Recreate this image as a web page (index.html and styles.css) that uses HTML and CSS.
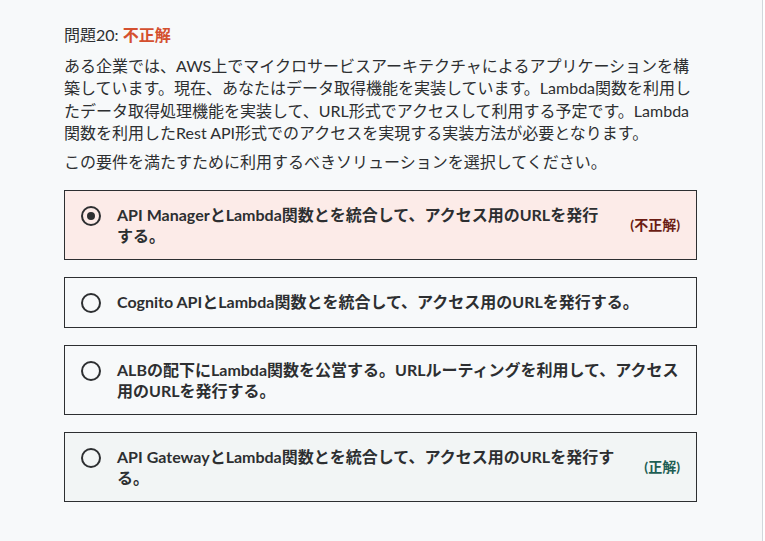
FILE: index.html
```html
<!DOCTYPE html>
<html lang="ja">
<head>
<meta charset="utf-8">
<title>問題20</title>
<link rel="stylesheet" href="styles.css">
</head>
<body>
<main class="page">
  <h2 class="q-title">問題20: <span class="q-result">不正解</span></h2>
  <p class="q-text">ある企業では、AWS上でマイクロサービスアーキテクチャによるアプリケーションを構築しています。現在、あなたはデータ取得機能を実装しています。Lambda関数を利用したデータ取得処理機能を実装して、URL形式でアクセスして利用する予定です。Lambda関数を利用したRest API形式でのアクセスを実現する実装方法が必要となります。</p>
  <p class="q-prompt">この要件を満たすために利用するべきソリューションを選択してください。</p>
  <ul class="answers">
    <li class="answer answer-wrong">
      <span class="radio radio-checked"><span class="radio-dot"></span></span>
      <span class="answer-text">API ManagerとLambda関数とを統合して、アクセス用のURLを発行する。</span>
      <span class="answer-tag tag-wrong">(不正解)</span>
    </li>
    <li class="answer">
      <span class="radio"></span>
      <span class="answer-text">Cognito APIとLambda関数とを統合して、アクセス用のURLを発行する。</span>
    </li>
    <li class="answer">
      <span class="radio"></span>
      <span class="answer-text">ALBの配下にLambda関数を公営する。URLルーティングを利用して、アクセス用のURLを発行する。</span>
    </li>
    <li class="answer answer-correct">
      <span class="radio"></span>
      <span class="answer-text">API GatewayとLambda関数とを統合して、アクセス用のURLを発行する。</span>
      <span class="answer-tag tag-correct">(正解)</span>
    </li>
  </ul>
</main>
</body>
</html>
```

FILE: styles.css
```css
html {
  background: #ffffff;
}
body {
  margin: 0;
  font-family: "Lato", "Noto Sans CJK JP", sans-serif;
  color: #2d2f31;
}
.page {
  box-sizing: border-box;
  width: 763px;
  min-height: 100vh;
  padding: 24px 65px 40px 64px;
  background: #f7f9fa;
  border-right: 1px solid #d1d7dc;
}
.q-title {
  margin: 0;
  font-size: 16px;
  font-weight: 400;
  line-height: 22px;
}
.q-result {
  color: #d4502f;
  font-weight: 700;
}
.q-text {
  margin: 9px 0 0;
  font-size: 16px;
  line-height: 22.4px;
}
.q-prompt {
  margin: 6px 0 0;
  font-size: 16px;
  line-height: 22.4px;
}
.answers {
  list-style: none;
  margin: 17px 0 0;
  padding: 0;
  display: flex;
  flex-direction: column;
  gap: 17px;
}
.answer {
  display: flex;
  align-items: flex-start;
  gap: 16px;
  padding: 13px 16px;
  border: 1px solid #2d2f31;
  background: #f7f9fa;
}
.answer-wrong {
  background: #fcebe8;
}
.answer-correct {
  background: #f2f5f5;
}
.radio {
  flex: none;
  box-sizing: border-box;
  width: 20px;
  height: 20px;
  margin: 1.5px 0;
  border: 2.7px solid #2d2f31;
  border-radius: 50%;
  display: flex;
  align-items: center;
  justify-content: center;
}
.radio-dot {
  width: 8px;
  height: 8px;
  border-radius: 50%;
  background: #2d2f31;
}
.answer-text {
  flex: 1;
  font-size: 16px;
  font-weight: 700;
  line-height: 21px;
}
.answer-tag {
  flex: none;
  align-self: center;
  margin-left: 2px;
  font-size: 14px;
  font-weight: 700;
  line-height: 18px;
}
.tag-wrong {
  color: #6b1d14;
}
.tag-correct {
  color: #1e5e54;
}
```
